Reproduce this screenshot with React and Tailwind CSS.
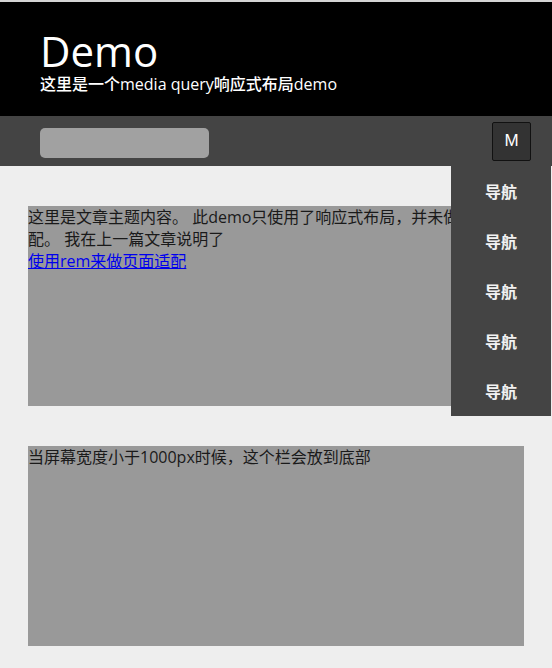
import React from 'react';

const navItems = ['导航', '导航', '导航', '导航', '导航'];

function Header() {
  return (
    <header className="bg-black border-t-2 border-[#d4d4d4] px-10 pt-[26px] pb-[22px] text-white">
      <h1 className="text-[42px] leading-[46px] font-normal">Demo</h1>
      <p className="text-base leading-5 font-medium">这里是一个media query响应式布局demo</p>
    </header>
  );
}

function NavBar() {
  return (
    <nav className="relative h-[50px] bg-[#444] flex items-center justify-between pl-10 pr-[21px]">
      <div className="mt-[4px] w-[169px] h-[30px] rounded-[5px] bg-[#a1a1a1]" />
      <button className="w-[39px] h-[39px] bg-[#333] border border-[#111] rounded-[2px] text-white text-[17px] font-['Liberation_Sans',sans-serif]">
        M
      </button>
      <ul className="absolute top-full right-[1px] w-[100px] bg-[#444] z-10">
        {navItems.map((item, i) => (
          <li key={i} className="h-[50px] flex items-center justify-center pt-[2px] text-[#f2f2f2] font-bold text-base">
            {item}
          </li>
        ))}
      </ul>
    </nav>
  );
}

function App() {
  return (
    <div className="min-h-[668px] bg-[#eee] font-['Open_Sans','Noto_Sans_CJK_SC',sans-serif]">
      <Header />
      <NavBar />
      <main className="px-7 pt-10 pb-[22px] flex flex-col gap-10 text-[#1a1a1a] text-base leading-[22px]">
        <section className="h-[200px] bg-[#999]">
          这里是文章主题内容。 此demo只使用了响应式布局，并未做页面适
          <br />
          配。 我在上一篇文章说明了
          <br />
          <a href="#" className="text-[#0000ee] underline">使用rem来做页面适配</a>
        </section>
        <section className="h-[200px] bg-[#999]">
          当屏幕宽度小于1000px时候，这个栏会放到底部
        </section>
      </main>
    </div>
  );
}

export default App;
